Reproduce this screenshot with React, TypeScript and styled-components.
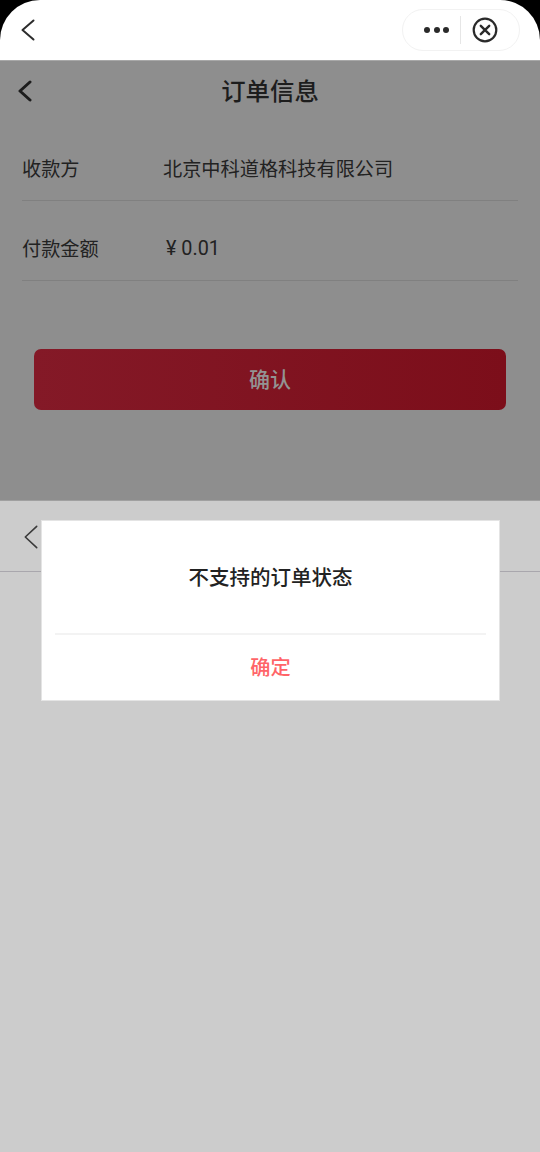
import React from "react";
import styled, { createGlobalStyle } from "styled-components";

const Global = createGlobalStyle`
  html, body { margin: 0; padding: 0; background: #000; }
  * { box-sizing: border-box; }
  body { font-family: "Noto Sans CJK SC", "Liberation Sans", sans-serif; }
`;

const Screen = styled.div`
  position: relative;
  width: 540px;
  height: 1152px;
  background: #000;
  overflow: hidden;
  display: flex;
  flex-direction: column;
`;

const TopBar = styled.header`
  height: 60px;
  flex: none;
  background: #fff;
  border-radius: 40px 40px 0 0;
  display: flex;
  align-items: center;
  justify-content: space-between;
  padding: 0 20px 0 21px;
`;

const Capsule = styled.div`
  width: 118px;
  height: 42px;
  border: 1px solid #f2f2f2;
  border-radius: 21px;
  display: flex;
  align-items: center;
  padding-left: 21px;
`;

const Dots = styled.div`
  display: flex;
  gap: 3.5px;
  width: 26px;
`;

const Dot = styled.span`
  width: 6px;
  height: 6px;
  border-radius: 50%;
  background: #2a2a2a;
`;

const CapsuleDivider = styled.span`
  width: 1px;
  height: 28px;
  margin-left: 10px;
  background: #e6e6e6;
`;

const CloseWrap = styled.span`
  display: flex;
  margin-left: 11px;
`;

const OrderPanel = styled.section`
  height: 441px;
  flex: none;
  background: #8e8e8e;
  border-top: 1px solid #a8a8a8;
  border-bottom: 1px solid #a0a0a0;
`;

const OrderNav = styled.div`
  position: relative;
  height: 60px;
  display: flex;
  align-items: flex-start;
  justify-content: center;
`;

const OrderBack = styled.span`
  position: absolute;
  left: 18px;
  top: 19px;
  display: flex;
`;

const Title = styled.h1`
  margin: 0;
  font-size: 24.4px;
  font-weight: 500;
  line-height: 58px;
  color: #1d1d1d;
`;

const InfoList = styled.div`
  margin: 0 22px;
`;

const InfoRow = styled.div`
  height: 80px;
  display: flex;
  align-items: center;
  padding-top: 14px;
  border-bottom: 1px solid #808080;
  font-size: 19.2px;
  color: #222;
`;

const Label = styled.span`
  width: 141px;
  flex: none;
`;

const Amount = styled.span`
  padding: 2px 0 0 3px;
  font-size: 19.8px;
  font-family: "Roboto", "Noto Sans CJK SC", sans-serif;
`;

const ButtonRow = styled.div`
  padding: 68px 34px 0;
`;

const ConfirmButton = styled.div`
  height: 61px;
  padding-bottom: 3px;
  border-radius: 7px;
  background: linear-gradient(90deg, #841927, #7c0e1a);
  display: flex;
  align-items: center;
  justify-content: center;
  font-size: 21px;
  font-weight: 500;
  color: #939393;
`;

const LowerPanel = styled.section`
  flex: 1;
  background: #cccccc;
`;

const LowerNav = styled.div`
  height: 71px;
  border-bottom: 1px solid #a9a7ad;
  padding: 24px 0 0 24px;
`;

const Modal = styled.div`
  position: absolute;
  left: 41px;
  top: 520px;
  width: 459px;
  height: 181px;
  background: #fff;
  border: 1px solid #e4e4e4;
  padding: 0 13px;
  display: flex;
  flex-direction: column;
`;

const ModalMessage = styled.div`
  height: 114px;
  flex: none;
  padding-bottom: 2px;
  border-bottom: 2px solid #f3f3f3;
  display: flex;
  align-items: center;
  justify-content: center;
  font-size: 20.5px;
  font-weight: 500;
  color: #222;
`;

const ModalAction = styled.div`
  flex: 1;
  padding-bottom: 2px;
  display: flex;
  align-items: center;
  justify-content: center;
  font-size: 20.2px;
  font-weight: 500;
  color: #ff6468;
`;

const Chevron = ({ w, h, sw, color }: { w: number; h: number; sw: number; color: string }) => (
  <svg width={w} height={h} viewBox={`0 0 ${w} ${h}`} fill="none">
    <path
      d={`M${w - sw / 2 - 0.5} ${sw / 2 + 0.5} L${sw / 2 + 0.5} ${h / 2} L${w - sw / 2 - 0.5} ${h - sw / 2 - 0.5}`}
      stroke={color}
      strokeWidth={sw}
      strokeLinecap="round"
      strokeLinejoin="round"
    />
  </svg>
);

export default function App() {
  return (
    <Screen>
      <Global />
      <TopBar>
        <Chevron w={14} h={22} sw={2} color="#2c2c2c" />
        <Capsule>
          <Dots>
            <Dot />
            <Dot />
            <Dot />
          </Dots>
          <CapsuleDivider />
          <CloseWrap>
            <svg width="26" height="26" viewBox="0 0 26 26" fill="none">
              <circle cx="13" cy="13" r="11.3" stroke="#2a2a2a" strokeWidth="2.2" />
              <path d="M8.8 8.8 L17.2 17.2 M17.2 8.8 L8.8 17.2" stroke="#2a2a2a" strokeWidth="2.4" strokeLinecap="round" />
            </svg>
          </CloseWrap>
        </Capsule>
      </TopBar>
      <OrderPanel>
        <OrderNav>
          <OrderBack>
            <Chevron w={14} h={22} sw={3} color="#1d1d1d" />
          </OrderBack>
          <Title>订单信息</Title>
        </OrderNav>
        <InfoList>
          <InfoRow>
            <Label>收款方</Label>
            <span>北京中科道格科技有限公司</span>
          </InfoRow>
          <InfoRow>
            <Label>付款金额</Label>
            <Amount>¥ 0.01</Amount>
          </InfoRow>
        </InfoList>
        <ButtonRow>
          <ConfirmButton>确认</ConfirmButton>
        </ButtonRow>
      </OrderPanel>
      <LowerPanel>
        <LowerNav>
          <Chevron w={14} h={24} sw={1.6} color="#3a3a3a" />
        </LowerNav>
      </LowerPanel>
      <Modal>
        <ModalMessage>不支持的订单状态</ModalMessage>
        <ModalAction>确定</ModalAction>
      </Modal>
    </Screen>
  );
}
